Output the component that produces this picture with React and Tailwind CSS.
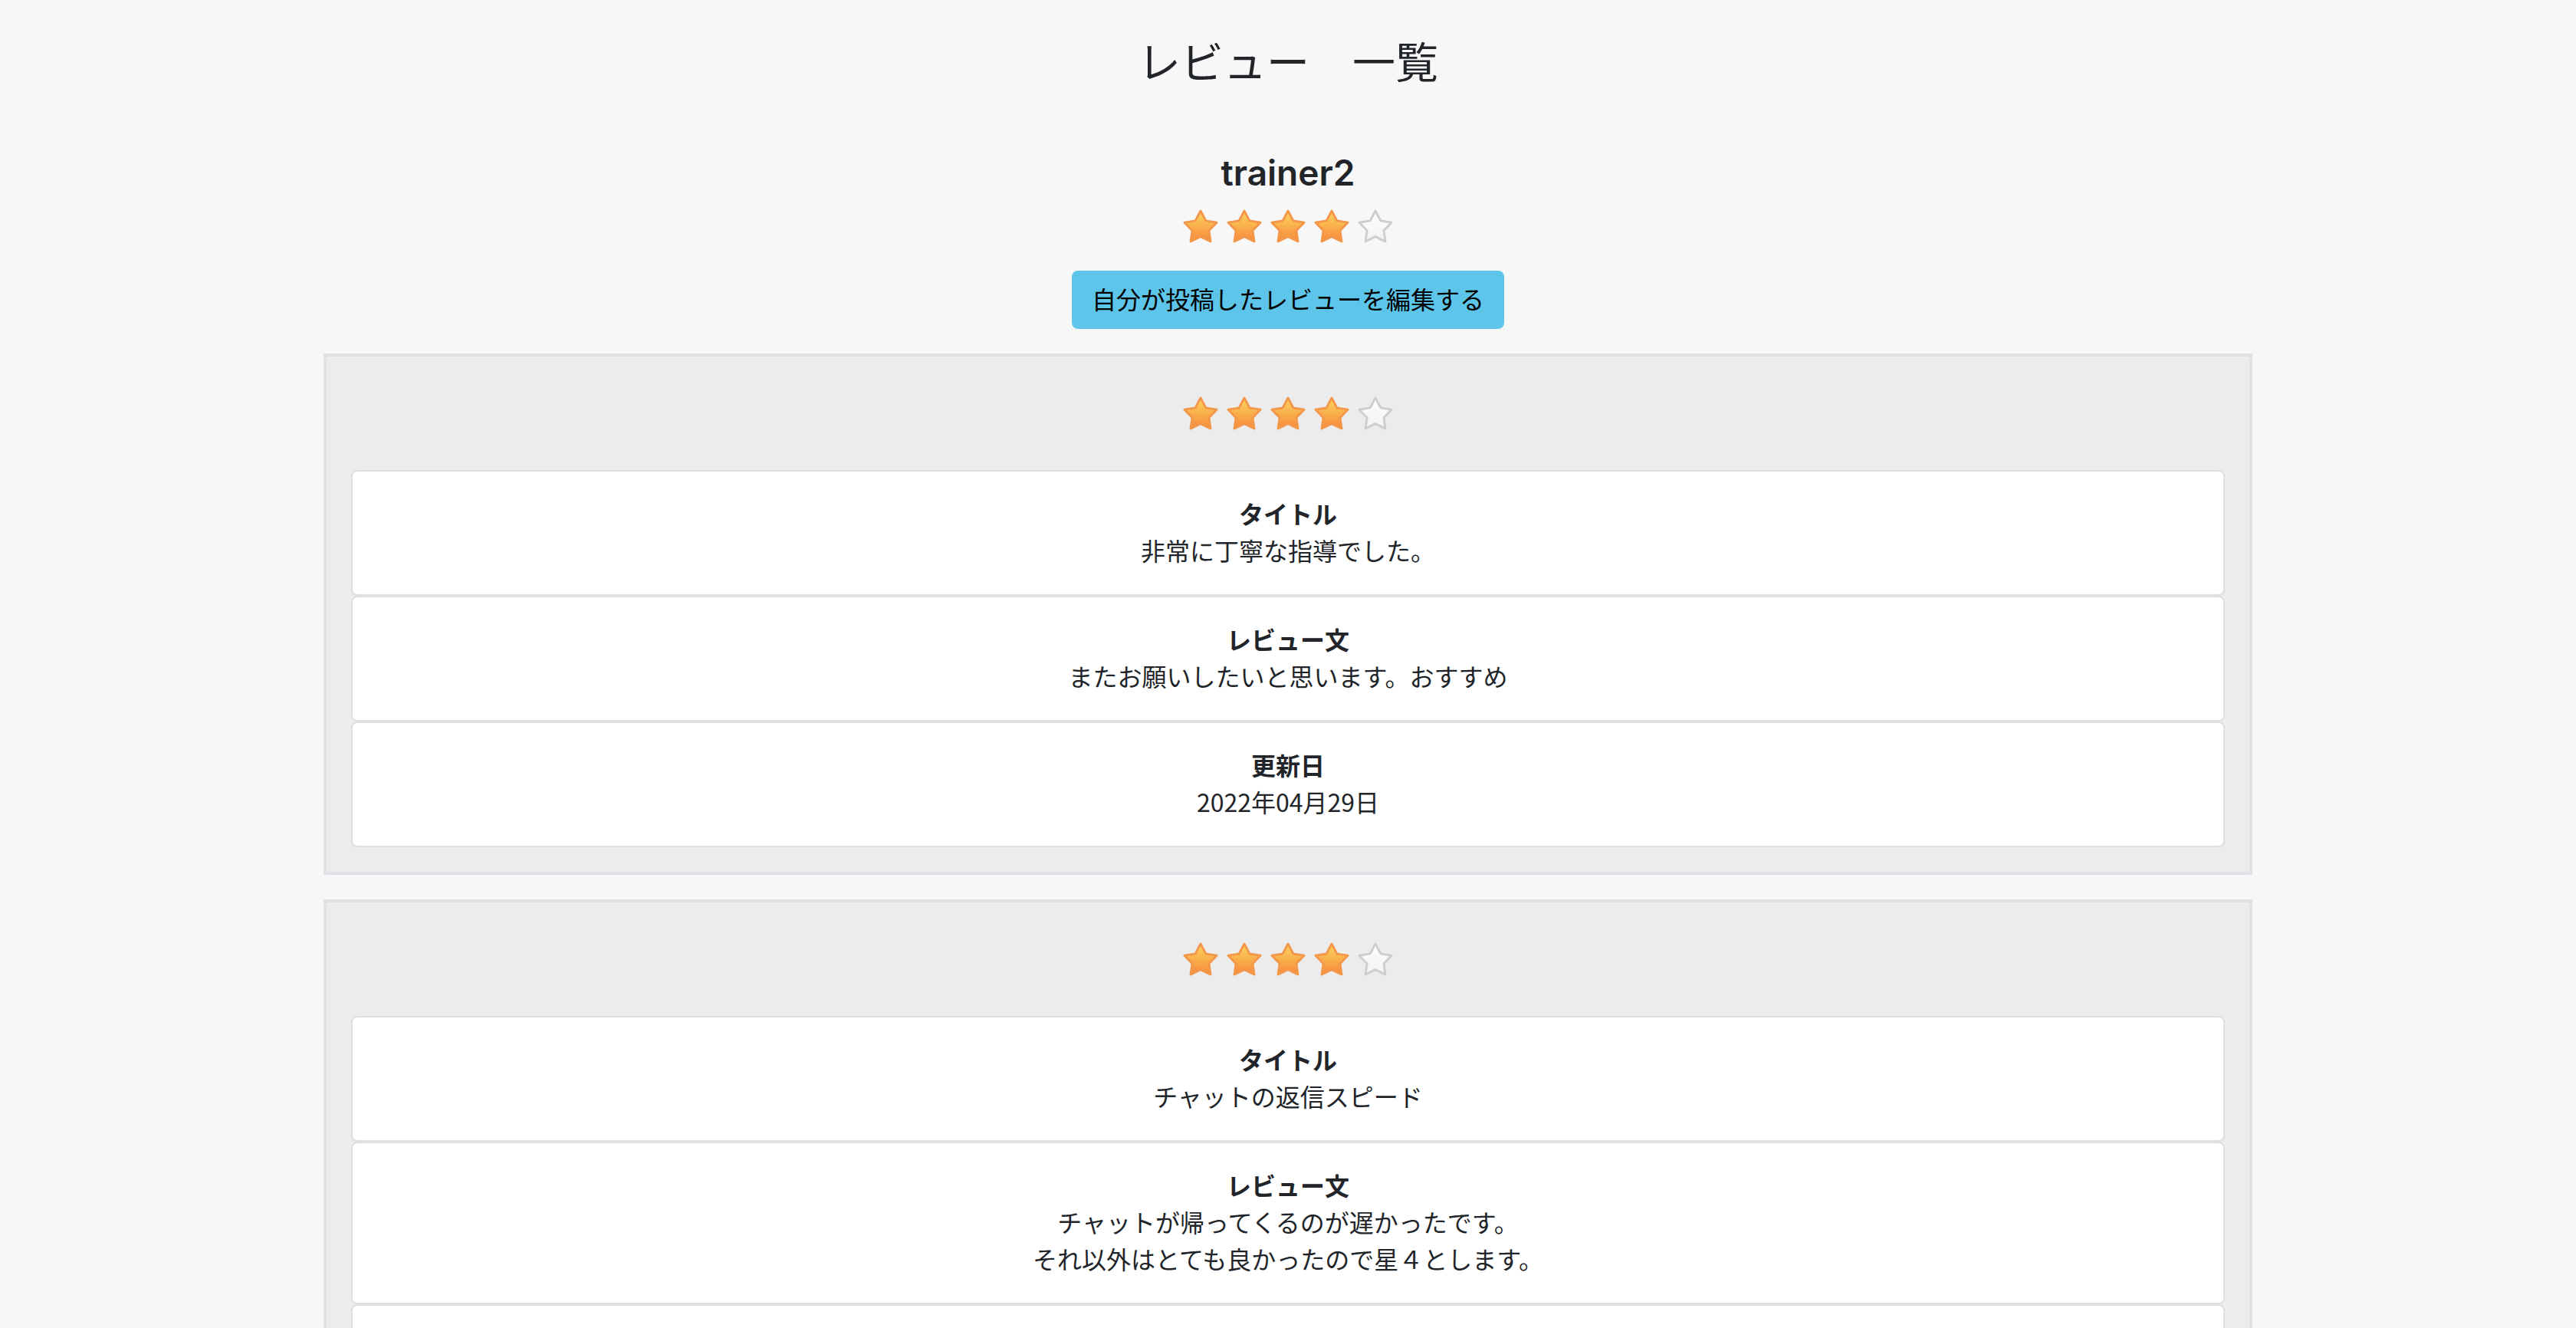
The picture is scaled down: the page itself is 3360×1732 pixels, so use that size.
import React from "react";

const reviews = [
  {
    rating: 4,
    title: "非常に丁寧な指導でした。",
    body: ["またお願いしたいと思います。おすすめ"],
    updatedAt: "2022年04月29日",
  },
  {
    rating: 4,
    title: "チャットの返信スピード",
    body: [
      "チャットが帰ってくるのが遅かったです。",
      "それ以外はとても良かったので星４とします。",
    ],
    updatedAt: "2022年04月28日",
  },
];

const Star = ({ filled }) => (
  <svg viewBox="1.6 1.9 20.8 19.9" className="w-[46px] h-[44px]">
    <defs>
      <linearGradient id="star-on" x1="0" y1="0" x2="0" y2="1">
        <stop offset="0" stopColor="#fdd65e" />
        <stop offset="1" stopColor="#f6893b" />
      </linearGradient>
      <linearGradient id="star-off" x1="0" y1="0" x2="0" y2="1">
        <stop offset="0" stopColor="#ffffff" />
        <stop offset="1" stopColor="#f1f1f1" />
      </linearGradient>
    </defs>
    <polygon
      points="12,2.8 15.06,8.59 21.51,9.71 16.95,14.41 17.88,20.89 12,18 6.12,20.89 7.05,14.41 2.49,9.71 8.94,8.59"
      fill={filled ? "url(#star-on)" : "url(#star-off)"}
      stroke={filled ? "#f3974a" : "#cdcdcd"}
      strokeWidth="1.3"
      strokeLinejoin="round"
    />
  </svg>
);

const Stars = ({ value }) => (
  <div className="flex justify-center gap-[11px]">
    {[1, 2, 3, 4, 5].map((n) => (
      <Star key={n} filled={n <= value} />
    ))}
  </div>
);

const Item = ({ label, lines }) => (
  <div className="bg-white border-2 border-[#dfdfdf] rounded-[8px] pt-[30px] pb-[34px] text-center">
    <p className="font-bold">{label}</p>
    {lines.map((line, i) => (
      <p key={i}>{line}</p>
    ))}
  </div>
);

const ReviewCard = ({ review }) => (
  <div className="w-[2516px] mx-auto mb-[32px] bg-[#ececec] border-4 border-[#dee2e6] pt-[52px] px-[32px] pb-[32px]">
    <div className="mb-[52px]">
      <Stars value={review.rating} />
    </div>
    <Item label="タイトル" lines={[review.title]} />
    <Item label="レビュー文" lines={review.body} />
    <Item label="更新日" lines={[review.updatedAt]} />
  </div>
);

export default function App() {
  return (
    <div className="min-h-screen bg-[#f7f7f7] text-[#212529] text-[32px] leading-[48px] font-['Noto_Sans_CJK_JP',sans-serif] pt-[44px]">
      <h3 className="text-center text-[56px] leading-[1.2] font-normal">
        レビュー　一覧
      </h3>
      <h4 className="mt-[86px] text-center text-[46px] leading-[57px] font-semibold font-['Inter','Noto_Sans_CJK_JP',sans-serif]">
        trainer2
      </h4>
      <div className="mt-[19px]">
        <Stars value={4} />
      </div>
      <div className="mt-[36px] mb-[32px] flex justify-center">
        <button className="bg-[#5ec5ea] border-2 border-[#5ec5ea] rounded-[8px] px-[24px] pt-[10px] pb-[14px] text-black text-[32px] leading-[48px]">
          自分が投稿したレビューを編集する
        </button>
      </div>
      {reviews.map((review, i) => (
        <ReviewCard key={i} review={review} />
      ))}
    </div>
  );
}
